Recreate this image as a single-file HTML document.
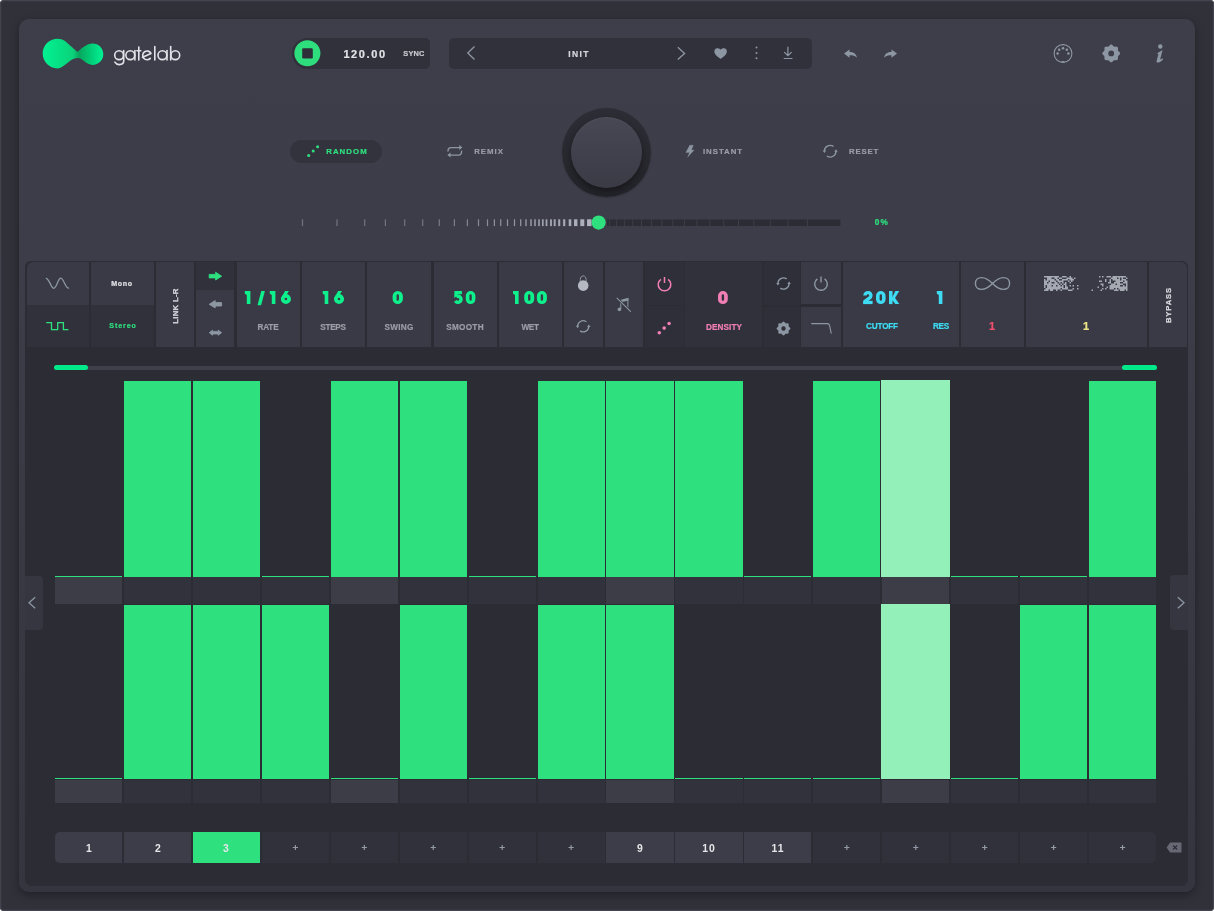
<!DOCTYPE html>
<html><head><meta charset="utf-8"><title>gatelab</title>
<style>
html,body{margin:0;padding:0;background:#ffffff;}
body{width:1214px;height:911px;position:relative;overflow:hidden;font-family:"Liberation Sans",sans-serif;}
div{box-sizing:border-box;}
</style></head><body>
<div style="position:absolute;left:0.00px;top:0.00px;width:1214.00px;height:911.00px;background:#31313a;border-radius:4px;box-shadow:inset 0 0 0 1.2px #44444f;"></div>
<div style="position:absolute;left:19.00px;top:19.00px;width:1176.00px;height:873.00px;background:linear-gradient(180deg,#3e3e4a 0%,#3d3d49 30%,#393944 60%,#35353f 100%);border-radius:10px;box-shadow:0 3px 8px rgba(0,0,0,.35);"></div>
<div style="position:absolute;left:25.00px;top:261.00px;width:1163.00px;height:625.00px;background:#2c2c35;border-radius:6px 6px 7px 7px;"></div>
<div style="position:absolute;left:292.00px;top:37.50px;width:137.50px;height:31.50px;background:#31313b;border-radius:16px 5px 5px 16px;"></div>
<div style="position:absolute;left:214.80px;top:49.06px;width:300px;text-align:center;font-size:11.00px;line-height:11.00px;font-weight:bold;color:#e2e2e6;letter-spacing:1.60px;white-space:nowrap;will-change:transform;-webkit-text-stroke:0.2px #e2e2e6;">120.00</div>
<div style="position:absolute;left:263.90px;top:50.13px;width:300px;text-align:center;font-size:7.40px;line-height:7.40px;font-weight:bold;color:#c8c9d0;letter-spacing:0.20px;white-space:nowrap;will-change:transform;-webkit-text-stroke:0.2px #c8c9d0;">SYNC</div>
<div style="position:absolute;left:449.00px;top:38.00px;width:363.00px;height:31.00px;background:#31313b;border-radius:5px;"></div>
<div style="position:absolute;left:428.70px;top:49.89px;width:300px;text-align:center;font-size:8.50px;line-height:8.50px;font-weight:bold;color:#d6d7dc;letter-spacing:1.40px;white-space:nowrap;will-change:transform;-webkit-text-stroke:0.2px #d6d7dc;">INIT</div>
<div style="position:absolute;left:289.50px;top:140.00px;width:92.50px;height:23.00px;background:#33333e;border-radius:12px;"></div>
<div style="position:absolute;left:196.85px;top:148.28px;width:300px;text-align:center;font-size:7.80px;line-height:7.80px;font-weight:bold;color:#2ee07e;letter-spacing:1.10px;white-space:nowrap;will-change:transform;-webkit-text-stroke:0.2px #2ee07e;">RANDOM</div>
<div style="position:absolute;left:338.55px;top:148.28px;width:300px;text-align:center;font-size:7.80px;line-height:7.80px;font-weight:bold;color:#9b9ca6;letter-spacing:1.00px;white-space:nowrap;will-change:transform;-webkit-text-stroke:0.2px #9b9ca6;">REMIX</div>
<div style="position:absolute;left:573.15px;top:148.28px;width:300px;text-align:center;font-size:7.80px;line-height:7.80px;font-weight:bold;color:#9b9ca6;letter-spacing:1.00px;white-space:nowrap;will-change:transform;-webkit-text-stroke:0.2px #9b9ca6;">INSTANT</div>
<div style="position:absolute;left:713.80px;top:148.28px;width:300px;text-align:center;font-size:7.80px;line-height:7.80px;font-weight:bold;color:#9b9ca6;letter-spacing:0.80px;white-space:nowrap;will-change:transform;-webkit-text-stroke:0.2px #9b9ca6;">RESET</div>
<div style="position:absolute;left:562px;top:107.5px;width:89px;height:89px;border-radius:50%;background:linear-gradient(180deg,#2d2d36 0%,#28282f 60%,#222229 100%);box-shadow:0 1px 2px rgba(0,0,0,.2);"></div>
<div style="position:absolute;left:571px;top:116.8px;width:71px;height:71px;border-radius:50%;background:linear-gradient(180deg,#484855 0%,#41414d 50%,#3b3b46 100%);box-shadow:0 3px 6px rgba(0,0,0,.4), inset 0 1px 0 rgba(255,255,255,.05);"></div>
<div style="position:absolute;left:732.30px;top:218.22px;width:300px;text-align:center;font-size:8.30px;line-height:8.30px;font-weight:bold;color:#2ee07e;letter-spacing:1.30px;white-space:nowrap;will-change:transform;-webkit-text-stroke:0.2px #2ee07e;">0%</div>
<div style="position:absolute;left:26.70px;top:262.20px;width:62.30px;height:42.40px;background:#3a3a46;border-top-left-radius:6px;"></div>
<div style="position:absolute;left:26.70px;top:304.60px;width:62.30px;height:42.40px;background:#31313b;"></div>
<div style="position:absolute;left:91.00px;top:262.20px;width:63.00px;height:42.40px;background:#3a3a46;"></div>
<div style="position:absolute;left:91.00px;top:304.60px;width:63.00px;height:42.40px;background:#31313b;"></div>
<div style="position:absolute;left:156.00px;top:262.20px;width:38.20px;height:84.80px;background:#3a3a46;"></div>
<div style="position:absolute;left:196.40px;top:262.20px;width:37.60px;height:27.80px;background:#31313b;"></div>
<div style="position:absolute;left:196.40px;top:290.00px;width:37.60px;height:57.00px;background:#3a3a46;"></div>
<div style="position:absolute;left:237.00px;top:262.20px;width:63.20px;height:84.80px;background:#3a3a46;"></div>
<div style="position:absolute;left:302.20px;top:262.20px;width:62.90px;height:84.80px;background:#3a3a46;"></div>
<div style="position:absolute;left:367.20px;top:262.20px;width:63.50px;height:84.80px;background:#3a3a46;"></div>
<div style="position:absolute;left:433.60px;top:262.20px;width:63.90px;height:84.80px;background:#3a3a46;"></div>
<div style="position:absolute;left:499.00px;top:262.20px;width:63.00px;height:84.80px;background:#3a3a46;"></div>
<div style="position:absolute;left:564.20px;top:262.20px;width:39.00px;height:84.80px;background:#3a3a46;"></div>
<div style="position:absolute;left:604.50px;top:262.20px;width:38.50px;height:84.80px;background:#3a3a46;"></div>
<div style="position:absolute;left:644.50px;top:262.20px;width:39.70px;height:42.50px;background:#2f2f39;"></div>
<div style="position:absolute;left:644.50px;top:306.00px;width:39.70px;height:41.00px;background:#2f2f39;"></div>
<div style="position:absolute;left:685.30px;top:262.20px;width:77.10px;height:84.80px;background:#31313b;"></div>
<div style="position:absolute;left:764.00px;top:262.20px;width:36.30px;height:43.00px;background:#2f2f39;"></div>
<div style="position:absolute;left:764.00px;top:307.00px;width:36.30px;height:40.00px;background:#2f2f39;"></div>
<div style="position:absolute;left:801.40px;top:262.20px;width:39.80px;height:42.30px;background:#3a3a46;"></div>
<div style="position:absolute;left:801.40px;top:306.50px;width:39.80px;height:40.50px;background:#3a3a46;"></div>
<div style="position:absolute;left:842.90px;top:262.20px;width:116.20px;height:84.80px;background:#3a3a46;"></div>
<div style="position:absolute;left:961.00px;top:262.20px;width:63.20px;height:84.80px;background:#3a3a46;"></div>
<div style="position:absolute;left:1026.20px;top:262.20px;width:120.60px;height:84.80px;background:#3a3a46;"></div>
<div style="position:absolute;left:1149.10px;top:262.20px;width:38.10px;height:84.80px;background:#3a3a46;border-top-right-radius:6px;"></div>
<div style="position:absolute;left:-27.60px;top:280.77px;width:300px;text-align:center;font-size:7.10px;line-height:7.10px;font-weight:bold;color:#e2e2e6;letter-spacing:0.60px;white-space:nowrap;will-change:transform;-webkit-text-stroke:0.2px #e2e2e6;">Mono</div>
<div style="position:absolute;left:-27.50px;top:323.07px;width:300px;text-align:center;font-size:7.10px;line-height:7.10px;font-weight:bold;color:#2ee07e;letter-spacing:0.90px;white-space:nowrap;will-change:transform;-webkit-text-stroke:0.2px #2ee07e;">Stereo</div>
<div style="position:absolute;left:125.5px;top:301px;width:100px;height:10px;text-align:center;font-size:7.8px;line-height:10px;font-weight:bold;color:#d6d7dc;letter-spacing:0.25px;transform:rotate(-90deg);white-space:nowrap;will-change:transform;-webkit-text-stroke:0.25px #d6d7dc;">LINK L-R</div>
<div style="position:absolute;left:1118.7px;top:300px;width:100px;height:10px;text-align:center;font-size:7.6px;line-height:10px;font-weight:bold;color:#d6d7dc;letter-spacing:0.9px;transform:rotate(-90deg);white-space:nowrap;will-change:transform;-webkit-text-stroke:0.25px #d6d7dc;">BYPASS</div>
<div style="position:absolute;left:118.15px;top:323.83px;width:300px;text-align:center;font-size:8.20px;line-height:8.20px;font-weight:bold;color:#9b9ca6;letter-spacing:-0.20px;white-space:nowrap;will-change:transform;-webkit-text-stroke:0.2px #9b9ca6;">RATE</div>
<div style="position:absolute;left:183.05px;top:323.83px;width:300px;text-align:center;font-size:8.20px;line-height:8.20px;font-weight:bold;color:#9b9ca6;letter-spacing:-0.30px;white-space:nowrap;will-change:transform;-webkit-text-stroke:0.2px #9b9ca6;">STEPS</div>
<div style="position:absolute;left:248.75px;top:323.83px;width:300px;text-align:center;font-size:8.20px;line-height:8.20px;font-weight:bold;color:#9b9ca6;letter-spacing:0.30px;white-space:nowrap;will-change:transform;-webkit-text-stroke:0.2px #9b9ca6;">SWING</div>
<div style="position:absolute;left:314.85px;top:323.83px;width:300px;text-align:center;font-size:8.20px;line-height:8.20px;font-weight:bold;color:#9b9ca6;letter-spacing:0.30px;white-space:nowrap;will-change:transform;-webkit-text-stroke:0.2px #9b9ca6;">SMOOTH</div>
<div style="position:absolute;left:380.15px;top:323.83px;width:300px;text-align:center;font-size:8.20px;line-height:8.20px;font-weight:bold;color:#9b9ca6;letter-spacing:-0.40px;white-space:nowrap;will-change:transform;-webkit-text-stroke:0.2px #9b9ca6;">WET</div>
<div style="position:absolute;left:573.50px;top:323.63px;width:300px;text-align:center;font-size:8.20px;line-height:8.20px;font-weight:bold;color:#f17fb5;letter-spacing:0.10px;white-space:nowrap;will-change:transform;-webkit-text-stroke:0.2px #f17fb5;">DENSITY</div>
<div style="position:absolute;left:732.05px;top:323.43px;width:300px;text-align:center;font-size:8.20px;line-height:8.20px;font-weight:bold;color:#3ddcf3;letter-spacing:-0.20px;white-space:nowrap;will-change:transform;-webkit-text-stroke:0.2px #3ddcf3;">CUTOFF</div>
<div style="position:absolute;left:790.95px;top:323.43px;width:300px;text-align:center;font-size:8.20px;line-height:8.20px;font-weight:bold;color:#3ddcf3;letter-spacing:-0.20px;white-space:nowrap;will-change:transform;-webkit-text-stroke:0.2px #3ddcf3;">RES</div>
<div style="position:absolute;left:841.85px;top:321.36px;width:300px;text-align:center;font-size:11.00px;line-height:11.00px;font-weight:bold;color:#f0506e;letter-spacing:0.00px;white-space:nowrap;will-change:transform;-webkit-text-stroke:0.2px #f0506e;">1</div>
<div style="position:absolute;left:935.70px;top:321.36px;width:300px;text-align:center;font-size:11.00px;line-height:11.00px;font-weight:bold;color:#ede488;letter-spacing:0.00px;white-space:nowrap;will-change:transform;-webkit-text-stroke:0.2px #ede488;">1</div>
<div style="position:absolute;left:55.00px;top:365.60px;width:1102.00px;height:4.30px;background:#40404b;border-radius:2px;"></div>
<div style="position:absolute;left:53.80px;top:365.00px;width:34.70px;height:5.30px;background:#00ea8a;border-radius:3px;"></div>
<div style="position:absolute;left:1122.00px;top:365.00px;width:34.60px;height:5.30px;background:#00ea8a;border-radius:3px;"></div>
<div style="position:absolute;left:55.00px;top:575.70px;width:67.20px;height:1.30px;background:#2ee07e;"></div>
<div style="position:absolute;left:55.00px;top:577.00px;width:67.20px;height:27.00px;background:#3d3d48;"></div>
<div style="position:absolute;left:55.00px;top:778.20px;width:67.20px;height:1.30px;background:#2ee07e;"></div>
<div style="position:absolute;left:55.00px;top:779.50px;width:67.20px;height:23.50px;background:#3d3d48;"></div>
<div style="position:absolute;left:123.93px;top:381.00px;width:67.20px;height:196.00px;background:#2ee07e;"></div>
<div style="position:absolute;left:123.93px;top:577.00px;width:67.20px;height:27.00px;background:#32323c;"></div>
<div style="position:absolute;left:123.93px;top:604.80px;width:67.20px;height:174.70px;background:#2ee07e;"></div>
<div style="position:absolute;left:123.93px;top:779.50px;width:67.20px;height:23.50px;background:#32323c;"></div>
<div style="position:absolute;left:192.86px;top:381.00px;width:67.20px;height:196.00px;background:#2ee07e;"></div>
<div style="position:absolute;left:192.86px;top:577.00px;width:67.20px;height:27.00px;background:#32323c;"></div>
<div style="position:absolute;left:192.86px;top:604.80px;width:67.20px;height:174.70px;background:#2ee07e;"></div>
<div style="position:absolute;left:192.86px;top:779.50px;width:67.20px;height:23.50px;background:#32323c;"></div>
<div style="position:absolute;left:261.79px;top:575.70px;width:67.20px;height:1.30px;background:#2ee07e;"></div>
<div style="position:absolute;left:261.79px;top:577.00px;width:67.20px;height:27.00px;background:#32323c;"></div>
<div style="position:absolute;left:261.79px;top:604.80px;width:67.20px;height:174.70px;background:#2ee07e;"></div>
<div style="position:absolute;left:261.79px;top:779.50px;width:67.20px;height:23.50px;background:#32323c;"></div>
<div style="position:absolute;left:330.72px;top:381.00px;width:67.20px;height:196.00px;background:#2ee07e;"></div>
<div style="position:absolute;left:330.72px;top:577.00px;width:67.20px;height:27.00px;background:#3d3d48;"></div>
<div style="position:absolute;left:330.72px;top:778.20px;width:67.20px;height:1.30px;background:#2ee07e;"></div>
<div style="position:absolute;left:330.72px;top:779.50px;width:67.20px;height:23.50px;background:#3d3d48;"></div>
<div style="position:absolute;left:399.65px;top:381.00px;width:67.20px;height:196.00px;background:#2ee07e;"></div>
<div style="position:absolute;left:399.65px;top:577.00px;width:67.20px;height:27.00px;background:#32323c;"></div>
<div style="position:absolute;left:399.65px;top:604.80px;width:67.20px;height:174.70px;background:#2ee07e;"></div>
<div style="position:absolute;left:399.65px;top:779.50px;width:67.20px;height:23.50px;background:#32323c;"></div>
<div style="position:absolute;left:468.58px;top:575.70px;width:67.20px;height:1.30px;background:#2ee07e;"></div>
<div style="position:absolute;left:468.58px;top:577.00px;width:67.20px;height:27.00px;background:#32323c;"></div>
<div style="position:absolute;left:468.58px;top:778.20px;width:67.20px;height:1.30px;background:#2ee07e;"></div>
<div style="position:absolute;left:468.58px;top:779.50px;width:67.20px;height:23.50px;background:#32323c;"></div>
<div style="position:absolute;left:537.51px;top:381.00px;width:67.20px;height:196.00px;background:#2ee07e;"></div>
<div style="position:absolute;left:537.51px;top:577.00px;width:67.20px;height:27.00px;background:#32323c;"></div>
<div style="position:absolute;left:537.51px;top:604.80px;width:67.20px;height:174.70px;background:#2ee07e;"></div>
<div style="position:absolute;left:537.51px;top:779.50px;width:67.20px;height:23.50px;background:#32323c;"></div>
<div style="position:absolute;left:606.44px;top:381.00px;width:67.20px;height:196.00px;background:#2ee07e;"></div>
<div style="position:absolute;left:606.44px;top:577.00px;width:67.20px;height:27.00px;background:#3d3d48;"></div>
<div style="position:absolute;left:606.44px;top:604.80px;width:67.20px;height:174.70px;background:#2ee07e;"></div>
<div style="position:absolute;left:606.44px;top:779.50px;width:67.20px;height:23.50px;background:#3d3d48;"></div>
<div style="position:absolute;left:675.37px;top:381.00px;width:67.20px;height:196.00px;background:#2ee07e;"></div>
<div style="position:absolute;left:675.37px;top:577.00px;width:67.20px;height:27.00px;background:#32323c;"></div>
<div style="position:absolute;left:675.37px;top:778.20px;width:67.20px;height:1.30px;background:#2ee07e;"></div>
<div style="position:absolute;left:675.37px;top:779.50px;width:67.20px;height:23.50px;background:#32323c;"></div>
<div style="position:absolute;left:744.30px;top:575.70px;width:67.20px;height:1.30px;background:#2ee07e;"></div>
<div style="position:absolute;left:744.30px;top:577.00px;width:67.20px;height:27.00px;background:#32323c;"></div>
<div style="position:absolute;left:744.30px;top:778.20px;width:67.20px;height:1.30px;background:#2ee07e;"></div>
<div style="position:absolute;left:744.30px;top:779.50px;width:67.20px;height:23.50px;background:#32323c;"></div>
<div style="position:absolute;left:813.23px;top:381.00px;width:67.20px;height:196.00px;background:#2ee07e;"></div>
<div style="position:absolute;left:813.23px;top:577.00px;width:67.20px;height:27.00px;background:#32323c;"></div>
<div style="position:absolute;left:813.23px;top:778.20px;width:67.20px;height:1.30px;background:#2ee07e;"></div>
<div style="position:absolute;left:813.23px;top:779.50px;width:67.20px;height:23.50px;background:#32323c;"></div>
<div style="position:absolute;left:881.36px;top:380.00px;width:68.80px;height:197.00px;background:#93f0b9;"></div>
<div style="position:absolute;left:882.16px;top:577.00px;width:67.20px;height:27.00px;background:#3d3d48;"></div>
<div style="position:absolute;left:881.36px;top:603.80px;width:68.80px;height:175.70px;background:#93f0b9;"></div>
<div style="position:absolute;left:882.16px;top:779.50px;width:67.20px;height:23.50px;background:#3d3d48;"></div>
<div style="position:absolute;left:951.09px;top:575.70px;width:67.20px;height:1.30px;background:#2ee07e;"></div>
<div style="position:absolute;left:951.09px;top:577.00px;width:67.20px;height:27.00px;background:#32323c;"></div>
<div style="position:absolute;left:951.09px;top:778.20px;width:67.20px;height:1.30px;background:#2ee07e;"></div>
<div style="position:absolute;left:951.09px;top:779.50px;width:67.20px;height:23.50px;background:#32323c;"></div>
<div style="position:absolute;left:1020.02px;top:575.70px;width:67.20px;height:1.30px;background:#2ee07e;"></div>
<div style="position:absolute;left:1020.02px;top:577.00px;width:67.20px;height:27.00px;background:#32323c;"></div>
<div style="position:absolute;left:1020.02px;top:604.80px;width:67.20px;height:174.70px;background:#2ee07e;"></div>
<div style="position:absolute;left:1020.02px;top:779.50px;width:67.20px;height:23.50px;background:#32323c;"></div>
<div style="position:absolute;left:1088.95px;top:381.00px;width:67.20px;height:196.00px;background:#2ee07e;"></div>
<div style="position:absolute;left:1088.95px;top:577.00px;width:67.20px;height:27.00px;background:#32323c;"></div>
<div style="position:absolute;left:1088.95px;top:604.80px;width:67.20px;height:174.70px;background:#2ee07e;"></div>
<div style="position:absolute;left:1088.95px;top:779.50px;width:67.20px;height:23.50px;background:#32323c;"></div>
<div style="position:absolute;left:55.00px;top:831.50px;width:67.20px;height:31.70px;background:#3d3d49;border-radius:5px 0 0 5px;"></div>
<div style="position:absolute;left:-61.40px;top:843.74px;width:300px;text-align:center;font-size:10.40px;line-height:10.40px;font-weight:bold;color:#e6e6ea;letter-spacing:0.00px;white-space:nowrap;will-change:transform;">1</div>
<div style="position:absolute;left:123.93px;top:831.50px;width:67.20px;height:31.70px;background:#3d3d49;"></div>
<div style="position:absolute;left:7.53px;top:843.74px;width:300px;text-align:center;font-size:10.40px;line-height:10.40px;font-weight:bold;color:#e6e6ea;letter-spacing:0.00px;white-space:nowrap;will-change:transform;">2</div>
<div style="position:absolute;left:192.86px;top:831.50px;width:67.20px;height:31.70px;background:#2ee07e;"></div>
<div style="position:absolute;left:76.46px;top:843.74px;width:300px;text-align:center;font-size:10.40px;line-height:10.40px;font-weight:bold;color:#e6e6ea;letter-spacing:0.00px;white-space:nowrap;will-change:transform;">3</div>
<div style="position:absolute;left:261.79px;top:831.50px;width:67.20px;height:31.70px;background:#31313b;"></div>
<div style="position:absolute;left:330.72px;top:831.50px;width:67.20px;height:31.70px;background:#31313b;"></div>
<div style="position:absolute;left:399.65px;top:831.50px;width:67.20px;height:31.70px;background:#31313b;"></div>
<div style="position:absolute;left:468.58px;top:831.50px;width:67.20px;height:31.70px;background:#31313b;"></div>
<div style="position:absolute;left:537.51px;top:831.50px;width:67.20px;height:31.70px;background:#31313b;"></div>
<div style="position:absolute;left:606.44px;top:831.50px;width:67.20px;height:31.70px;background:#3d3d49;"></div>
<div style="position:absolute;left:490.04px;top:843.74px;width:300px;text-align:center;font-size:10.40px;line-height:10.40px;font-weight:bold;color:#e6e6ea;letter-spacing:0.00px;white-space:nowrap;will-change:transform;">9</div>
<div style="position:absolute;left:675.37px;top:831.50px;width:67.20px;height:31.70px;background:#3d3d49;"></div>
<div style="position:absolute;left:559.47px;top:843.74px;width:300px;text-align:center;font-size:10.40px;line-height:10.40px;font-weight:bold;color:#e6e6ea;letter-spacing:1.00px;white-space:nowrap;will-change:transform;">10</div>
<div style="position:absolute;left:744.30px;top:831.50px;width:67.20px;height:31.70px;background:#3d3d49;"></div>
<div style="position:absolute;left:628.40px;top:843.74px;width:300px;text-align:center;font-size:10.40px;line-height:10.40px;font-weight:bold;color:#e6e6ea;letter-spacing:1.00px;white-space:nowrap;will-change:transform;">11</div>
<div style="position:absolute;left:813.23px;top:831.50px;width:67.20px;height:31.70px;background:#31313b;"></div>
<div style="position:absolute;left:882.16px;top:831.50px;width:67.20px;height:31.70px;background:#31313b;"></div>
<div style="position:absolute;left:951.09px;top:831.50px;width:67.20px;height:31.70px;background:#31313b;"></div>
<div style="position:absolute;left:1020.02px;top:831.50px;width:67.20px;height:31.70px;background:#31313b;"></div>
<div style="position:absolute;left:1088.95px;top:831.50px;width:67.20px;height:31.70px;background:#31313b;border-radius:0 5px 5px 0;"></div>
<div style="position:absolute;left:25.00px;top:575.80px;width:17.70px;height:54.10px;background:#363641;border-radius:0 4px 4px 0;"></div>
<div style="position:absolute;left:1170.40px;top:575.20px;width:17.60px;height:54.50px;background:#363641;border-radius:4px 0 0 4px;"></div>
<svg style="position:absolute;left:0;top:0" width="1214" height="911" viewBox="0 0 1214 911">
<defs><linearGradient id="lg" gradientUnits="userSpaceOnUse" x1="42" y1="0" x2="104" y2="0">
<stop offset="0" stop-color="#00f292"/><stop offset="0.5" stop-color="#0bd27a"/><stop offset="0.6" stop-color="#07a55d"/><stop offset="0.72" stop-color="#03c06e"/><stop offset="1" stop-color="#00f595"/></linearGradient></defs>
<path fill="url(#lg)" d="M57.5 38.8 C49.3 38.8 42.7 45.4 42.7 53.6 C42.7 61.8 49.3 68.4 57.5 68.4 C64 68.4 70 58 77.5 58 C83 58 86 64.9 92.6 64.9 C98.5 64.9 103.3 60.1 103.3 54.2 C103.3 48.3 98.5 43.6 92.6 43.6 C86 43.6 80 50 77.5 52 L65 41 C62.5 39.7 60.5 38.8 57.5 38.8 Z"/>
<g fill="none" stroke="#e2e2e8" stroke-width="1.6" stroke-linecap="round"><circle cx="119.1" cy="55.2" r="4.4"/><path d="M123.7 50.6 V61 C123.7 63.3 121.8 64.6 119.3 64.6 C117.2 64.6 115.7 63.6 114.9 62.2"/><circle cx="130.3" cy="55.2" r="4.4"/><path d="M134.9 50.6 V59.9"/><path d="M138.8 47 V59.9 M136.9 50.7 H140.8"/><path d="M151.0 53.4 A4.4 4.4 0 1 0 150.3 58.4 M151.0 53.4 L142.5 57.3"/><path d="M154.8 46.6 V59.9"/><circle cx="162.4" cy="55.2" r="4.4"/><path d="M167.0 50.6 V59.9"/><path d="M170.7 46.6 V59.9"/><circle cx="175.3" cy="55.2" r="4.4"/></g>
<circle cx="307.4" cy="53.2" r="13" fill="#2ede7d"/>
<rect x="302.2" y="48.2" width="10.6" height="10.2" rx="1.2" fill="#2e2e38"/>
<path d="M474.5 46.5 L467.8 53 L474.5 59.5" fill="none" stroke="#8d97a3" stroke-width="1.3"/>
<path d="M677.8 47.3 L684.6 53.4 L677.8 59.5" fill="none" stroke="#8d97a3" stroke-width="1.3"/>
<path d="M720.6 58.2 C716.8 55.8 714.9 53.8 714.9 51.5 C714.9 49.8 716.1 48.7 717.6 48.7 C718.9 48.7 719.9 49.4 720.6 50.4 C721.3 49.4 722.3 48.7 723.6 48.7 C725.1 48.7 726.3 49.8 726.3 51.5 C726.3 53.8 724.4 55.8 720.6 58.2 Z" fill="#8d97a3" stroke="#8d97a3" stroke-width="1.1" stroke-linejoin="round"/>
<circle cx="756.5" cy="47.5" r="1" fill="#8d97a3"/>
<circle cx="756.5" cy="53" r="1" fill="#8d97a3"/>
<circle cx="756.5" cy="58.3" r="1" fill="#8d97a3"/>
<path d="M787.9 47.2 V55.6 M784.5 52.3 L787.9 55.7 L791.3 52.3 M784.2 58.5 H792" fill="none" stroke="#8d97a3" stroke-width="1.2" stroke-linecap="round"/>
<path d="M844 53.6 L849.5 49.6 V52 C853.5 52 856 53.5 857 57.7 C855 55.8 853 55.3 849.5 55.3 V57.7 Z" fill="#8d97a3"/>
<path d="M897 53.6 L891.5 49.6 V52 C887.5 52 885 53.5 884 57.7 C886 55.8 888 55.3 891.5 55.3 V57.7 Z" fill="#8d97a3"/>
<circle cx="1063" cy="53.5" r="8.9" fill="none" stroke="#8d97a3" stroke-width="1.1"/>
<circle cx="1057.60" cy="53.50" r="1.25" fill="#8d97a3"/>
<circle cx="1059.18" cy="49.75" r="1.25" fill="#8d97a3"/>
<circle cx="1063.00" cy="48.20" r="1.25" fill="#8d97a3"/>
<circle cx="1066.82" cy="49.75" r="1.25" fill="#8d97a3"/>
<circle cx="1068.40" cy="53.50" r="1.25" fill="#8d97a3"/>
<path d="M1060.9 62.5 Q1063 59.6 1065.1 62.5 Z" fill="#8d97a3"/>
<path d="M1111.20 44.50 L1111.78 44.62 L1112.31 44.95 L1112.79 45.41 L1113.21 45.89 L1113.61 46.30 L1114.03 46.56 L1114.52 46.67 L1115.09 46.67 L1115.73 46.62 L1116.39 46.64 L1117.00 46.78 L1117.49 47.11 L1117.82 47.60 L1117.96 48.21 L1117.98 48.87 L1117.93 49.51 L1117.93 50.08 L1118.04 50.57 L1118.30 50.99 L1118.71 51.39 L1119.19 51.81 L1119.65 52.29 L1119.98 52.82 L1120.10 53.40 L1119.98 53.98 L1119.65 54.51 L1119.19 54.99 L1118.71 55.41 L1118.30 55.81 L1118.04 56.23 L1117.93 56.72 L1117.93 57.29 L1117.98 57.93 L1117.96 58.59 L1117.82 59.20 L1117.49 59.69 L1117.00 60.02 L1116.39 60.16 L1115.73 60.18 L1115.09 60.13 L1114.52 60.13 L1114.03 60.24 L1113.61 60.50 L1113.21 60.91 L1112.79 61.39 L1112.31 61.85 L1111.78 62.18 L1111.20 62.30 L1110.62 62.18 L1110.09 61.85 L1109.61 61.39 L1109.19 60.91 L1108.79 60.50 L1108.37 60.24 L1107.88 60.13 L1107.31 60.13 L1106.67 60.18 L1106.01 60.16 L1105.40 60.02 L1104.91 59.69 L1104.58 59.20 L1104.44 58.59 L1104.42 57.93 L1104.47 57.29 L1104.47 56.72 L1104.36 56.23 L1104.10 55.81 L1103.69 55.41 L1103.21 54.99 L1102.75 54.51 L1102.42 53.98 L1102.30 53.40 L1102.42 52.82 L1102.75 52.29 L1103.21 51.81 L1103.69 51.39 L1104.10 50.99 L1104.36 50.57 L1104.47 50.08 L1104.47 49.51 L1104.42 48.87 L1104.44 48.21 L1104.58 47.60 L1104.91 47.11 L1105.40 46.78 L1106.01 46.64 L1106.67 46.62 L1107.31 46.67 L1107.88 46.67 L1108.37 46.56 L1108.79 46.30 L1109.19 45.89 L1109.61 45.41 L1110.09 44.95 L1110.62 44.62 L1111.20 44.50 Z M1114.1000000000001 53.4 A2.9 2.9 0 1 0 1108.3 53.4 A2.9 2.9 0 1 0 1114.1000000000001 53.4 Z" fill="#8d97a3" fill-rule="evenodd"/>
<circle cx="1160.3" cy="46.5" r="2.2" fill="#8d97a3"/>
<path d="M1156.8 53.4 L1162.6 49.9 L1160.1 59.4 L1163.1 58.2 L1162.7 59.9 C1161 61.5 1159 62.6 1157.7 62.6 C1156.7 62.6 1156.3 61.9 1156.6 60.8 L1158.5 54 Z" fill="#8d97a3"/>
<circle cx="308.7" cy="155.6" r="1.5" fill="#2ee07e"/>
<circle cx="313.2" cy="151.1" r="1.5" fill="#2ee07e"/>
<circle cx="317.6" cy="146.7" r="1.5" fill="#2ee07e"/>
<path d="M448 151 C448 149 449.3 147.6 451.2 147.6 H459.6 M461.6 151.2 C461.6 153.4 460.4 155.1 458.4 155.1 H450.2" fill="none" stroke="#8d97a3" stroke-width="1.4" stroke-linecap="round"/>
<path d="M459.3 145.1 L462.3 147.6 L459.3 150.1 Z M450.5 152.6 L447.4 155.1 L450.5 157.6 Z" fill="#8d97a3"/>
<path d="M689.8 145.2 L693.3 145.2 L691.4 150.1 L694.1 150.1 L687.6 157.3 L689.5 152.4 L685.8 152.4 Z" fill="#8d97a3" stroke="#8d97a3" stroke-width="0.3" stroke-linejoin="round"/>
<path d="M833.10 146.18 A5.8 5.8 0 0 0 824.40 151.20 M827.30 156.22 A5.8 5.8 0 0 0 836.00 151.20" fill="none" stroke="#8d97a3" stroke-width="1.3" stroke-linecap="round"/><path d="M822.70 150.60 L826.10 150.60 L824.40 153.10 Z" fill="#8d97a3"/><path d="M834.30 151.80 L837.70 151.80 L836.00 149.30 Z" fill="#8d97a3"/>
<rect x="301.90" y="219.3" width="1.20" height="6.8" fill="rgb(112,116,126)"/>
<rect x="336.40" y="219.3" width="1.20" height="6.8" fill="rgb(112,116,126)"/>
<rect x="364.10" y="219.3" width="1.20" height="6.8" fill="rgb(112,116,126)"/>
<rect x="384.80" y="219.3" width="1.20" height="6.8" fill="rgb(112,116,126)"/>
<rect x="404.10" y="219.3" width="1.20" height="6.8" fill="rgb(112,116,126)"/>
<rect x="422.10" y="219.3" width="1.20" height="6.8" fill="rgb(113,117,127)"/>
<rect x="438.70" y="219.3" width="1.20" height="6.8" fill="rgb(119,123,133)"/>
<rect x="453.80" y="219.3" width="1.20" height="6.8" fill="rgb(124,128,138)"/>
<rect x="466.80" y="219.3" width="1.20" height="6.8" fill="rgb(129,133,143)"/>
<rect x="477.90" y="219.3" width="1.20" height="6.8" fill="rgb(134,138,148)"/>
<rect x="486.90" y="219.3" width="1.20" height="6.8" fill="rgb(137,141,151)"/>
<rect x="493.80" y="219.3" width="1.20" height="6.8" fill="rgb(140,144,154)"/>
<rect x="500.10" y="219.3" width="1.20" height="6.8" fill="rgb(142,146,156)"/>
<rect x="506.90" y="219.3" width="1.20" height="6.8" fill="rgb(144,148,158)"/>
<rect x="513.90" y="219.3" width="1.20" height="6.8" fill="rgb(147,151,161)"/>
<rect x="520.09" y="219.3" width="1.22" height="6.8" fill="rgb(149,153,163)"/>
<rect x="525.33" y="219.3" width="1.33" height="6.8" fill="rgb(151,155,165)"/>
<rect x="530.28" y="219.3" width="1.44" height="6.8" fill="rgb(153,157,167)"/>
<rect x="534.24" y="219.3" width="1.53" height="6.8" fill="rgb(155,159,169)"/>
<rect x="538.19" y="219.3" width="1.61" height="6.8" fill="rgb(156,160,170)"/>
<rect x="541.95" y="219.3" width="1.70" height="6.8" fill="rgb(158,162,172)"/>
<rect x="545.61" y="219.3" width="1.78" height="6.8" fill="rgb(159,163,173)"/>
<rect x="550.06" y="219.3" width="1.87" height="6.8" fill="rgb(161,165,175)"/>
<rect x="553.72" y="219.3" width="1.95" height="6.8" fill="rgb(162,166,176)"/>
<rect x="558.17" y="219.3" width="2.05" height="6.8" fill="rgb(164,168,178)"/>
<rect x="563.12" y="219.3" width="2.16" height="6.8" fill="rgb(166,170,180)"/>
<rect x="568.70" y="219.3" width="2.60" height="6.8" fill="rgb(168,172,182)"/>
<rect x="574.00" y="219.3" width="3.40" height="6.8" fill="rgb(170,174,184)"/>
<rect x="580.30" y="219.3" width="4.00" height="6.8" fill="rgb(173,177,187)"/>
<rect x="587.05" y="219.3" width="4.50" height="6.8" fill="rgb(175,179,189)"/>
<rect x="607.00" y="219.5" width="2.10" height="6.5" fill="#2c2c35"/>
<rect x="610.10" y="219.5" width="6.00" height="6.5" fill="#2c2c35"/>
<rect x="617.10" y="219.5" width="6.80" height="6.5" fill="#2c2c35"/>
<rect x="624.90" y="219.5" width="7.30" height="6.5" fill="#2c2c35"/>
<rect x="633.20" y="219.5" width="7.80" height="6.5" fill="#2c2c35"/>
<rect x="642.00" y="219.5" width="8.90" height="6.5" fill="#2c2c35"/>
<rect x="651.90" y="219.5" width="9.50" height="6.5" fill="#2c2c35"/>
<rect x="662.40" y="219.5" width="9.90" height="6.5" fill="#2c2c35"/>
<rect x="673.30" y="219.5" width="10.60" height="6.5" fill="#2c2c35"/>
<rect x="684.90" y="219.5" width="11.50" height="6.5" fill="#2c2c35"/>
<rect x="697.40" y="219.5" width="11.90" height="6.5" fill="#2c2c35"/>
<rect x="710.30" y="219.5" width="12.90" height="6.5" fill="#2c2c35"/>
<rect x="724.20" y="219.5" width="13.80" height="6.5" fill="#2c2c35"/>
<rect x="739.00" y="219.5" width="14.30" height="6.5" fill="#2c2c35"/>
<rect x="754.30" y="219.5" width="15.60" height="6.5" fill="#2c2c35"/>
<rect x="770.90" y="219.5" width="16.50" height="6.5" fill="#2c2c35"/>
<rect x="788.40" y="219.5" width="18.60" height="6.5" fill="#2c2c35"/>
<rect x="808.00" y="219.5" width="32.30" height="6.5" fill="#2c2c35"/>
<circle cx="598.6" cy="222.6" r="7.1" fill="#2ee07e"/>
<path d="M244.80 291.0 H250.40 V304.1 H246.80 V294.90 L244.80 293.70 Z" fill="#0ef08c"/>
<path d="M257.5 305.3 L261.1 305.3 L264.9 291.0 L261.3 291.0 Z" fill="#0ef08c"/>
<path d="M269.80 291.0 H275.40 V304.1 H271.80 V294.90 L269.80 293.70 Z" fill="#0ef08c"/>
<path fill-rule="evenodd" fill="#0ef08c" d="M290.95 299.05 A5.05 5.05 0 1 1 280.85 299.05 A5.05 5.05 0 1 1 290.95 299.05 Z M287.20 299.05 A1.3 1.3 0 1 0 284.60 299.05 A1.3 1.3 0 1 0 287.20 299.05 Z"/><path fill="#0ef08c" d="M285.00 291.0 L288.90 291.0 L285.70 296.30 L281.20 298.20 Z"/>
<path d="M322.70 291.0 H328.30 V304.1 H324.70 V294.90 L322.70 293.70 Z" fill="#0ef08c"/>
<path fill-rule="evenodd" fill="#0ef08c" d="M344.05 299.05 A5.05 5.05 0 1 1 333.95 299.05 A5.05 5.05 0 1 1 344.05 299.05 Z M340.30 299.05 A1.3 1.3 0 1 0 337.70 299.05 A1.3 1.3 0 1 0 340.30 299.05 Z"/><path fill="#0ef08c" d="M338.10 291.0 L342.00 291.0 L338.80 296.30 L334.30 298.20 Z"/>
<path fill-rule="evenodd" fill="#0ef08c" d="M397.75 291.0 A5.15 5.15 0 0 1 402.90 296.15 V298.95 A5.15 5.15 0 0 1 397.75 304.1 A5.15 5.15 0 0 1 392.60 298.95 V296.15 A5.15 5.15 0 0 1 397.75 291.0 Z M397.75 294.30 A1.2 1.2 0 0 1 398.95 295.50 V299.60 A1.2 1.2 0 0 1 397.75 300.80 A1.2 1.2 0 0 1 396.55 299.60 V295.50 A1.2 1.2 0 0 1 397.75 294.30 Z"/>
<path d="M513.00 291.0 H518.60 V304.1 H515.00 V294.90 L513.00 293.70 Z" fill="#0ef08c"/>
<path fill-rule="evenodd" fill="#0ef08c" d="M529.20 291.0 A5.0 5.0 0 0 1 534.20 296.00 V299.10 A5.0 5.0 0 0 1 529.20 304.1 A5.0 5.0 0 0 1 524.20 299.10 V296.00 A5.0 5.0 0 0 1 529.20 291.0 Z M529.20 294.30 A1.2 1.2 0 0 1 530.40 295.50 V299.60 A1.2 1.2 0 0 1 529.20 300.80 A1.2 1.2 0 0 1 528.00 299.60 V295.50 A1.2 1.2 0 0 1 529.20 294.30 Z"/>
<path fill-rule="evenodd" fill="#0ef08c" d="M541.90 291.0 A5.0 5.0 0 0 1 546.90 296.00 V299.10 A5.0 5.0 0 0 1 541.90 304.1 A5.0 5.0 0 0 1 536.90 299.10 V296.00 A5.0 5.0 0 0 1 541.90 291.0 Z M541.90 294.30 A1.2 1.2 0 0 1 543.10 295.50 V299.60 A1.2 1.2 0 0 1 541.90 300.80 A1.2 1.2 0 0 1 540.70 299.60 V295.50 A1.2 1.2 0 0 1 541.90 294.30 Z"/>
<path fill-rule="evenodd" fill="#f17fb5" d="M722.90 291.0 A4.9 4.9 0 0 1 727.80 295.90 V299.20 A4.9 4.9 0 0 1 722.90 304.1 A4.9 4.9 0 0 1 718.00 299.20 V295.90 A4.9 4.9 0 0 1 722.90 291.0 Z M722.90 294.30 A1.2 1.2 0 0 1 724.10 295.50 V299.60 A1.2 1.2 0 0 1 722.90 300.80 A1.2 1.2 0 0 1 721.70 299.60 V295.50 A1.2 1.2 0 0 1 722.90 294.30 Z"/>
<path d="M936.80 291.0 H942.40 V304.1 H938.80 V294.90 L936.80 293.70 Z" fill="#3ddcf3"/>
<path fill="#0ef08c" d="M454.40 291.0 H461.90 V294.30 H457.70 L457.50 295.60 L454.20 297.90 Z"/><path fill="none" stroke="#0ef08c" stroke-width="3.45" d="M456.25 296.80 A3.05 3.05 0 1 1 455.41 300.92"/>
<path fill-rule="evenodd" fill="#0ef08c" d="M470.60 291.0 A4.8 4.8 0 0 1 475.40 295.80 V299.30 A4.8 4.8 0 0 1 470.60 304.1 A4.8 4.8 0 0 1 465.80 299.30 V295.80 A4.8 4.8 0 0 1 470.60 291.0 Z M470.60 294.30 A1.2 1.2 0 0 1 471.80 295.50 V299.60 A1.2 1.2 0 0 1 470.60 300.80 A1.2 1.2 0 0 1 469.40 299.60 V295.50 A1.2 1.2 0 0 1 470.60 294.30 Z"/>
<path fill="none" stroke="#3ddcf3" stroke-width="3.4" d="M864.90 295.60 A3.0 3.0 0 1 1 870.36 297.32 L864.40 301.90"/><path fill="#3ddcf3" d="M863.10 300.80 H872.60 V304.1 H863.10 Z"/>
<path fill-rule="evenodd" fill="#3ddcf3" d="M880.80 291.0 A4.8 4.8 0 0 1 885.60 295.80 V299.30 A4.8 4.8 0 0 1 880.80 304.1 A4.8 4.8 0 0 1 876.00 299.30 V295.80 A4.8 4.8 0 0 1 880.80 291.0 Z M880.80 294.30 A1.2 1.2 0 0 1 882.00 295.50 V299.60 A1.2 1.2 0 0 1 880.80 300.80 A1.2 1.2 0 0 1 879.60 299.60 V295.50 A1.2 1.2 0 0 1 880.80 294.30 Z"/>
<path fill="#3ddcf3" d="M889.00 291.0 H892.50 V304.1 H889.00 Z"/><path fill="#3ddcf3" d="M891.60 298.40 L895.40 291.0 H899.30 L894.40 298.90 L891.60 301.20 Z"/><path fill="#3ddcf3" d="M893.90 296.20 L899.30 304.1 H895.30 L891.80 299.60 Z"/>
<path d="M46.3 278.3 C49.5 279 51 288.3 53.8 288.3 C56.6 288.3 58 278.2 60.8 278.2 C63.6 278.2 65 287.5 68.5 288.2" fill="none" stroke="#8d97a3" stroke-width="1.3" stroke-linecap="round"/>
<path d="M46.2 322.6 H51.5 V329.6 H57.7 V322.6 H63.4 V329.6 H68.4" fill="none" stroke="#2ee07e" stroke-width="1.3"/>
<path d="M209.2 274.4 H215.6 V272.2 L221.6 276.2 L215.6 280.0 V277.9 H209.2 Z" fill="#2ee07e" stroke="#2ee07e" stroke-width="0.9" stroke-linejoin="round"/>
<path d="M221.6 302.6 H215.2 V300.6 L209.2 304.3 L215.2 307.9 V306.0 H221.6 Z" fill="#8d97a3" stroke="#8d97a3" stroke-width="0.9" stroke-linejoin="round"/>
<path d="M209.2 332.7 L212.6 330.1 V331.4 H218.2 V330.1 L221.6 332.7 L218.2 335.3 V334.0 H212.6 V335.3 Z" fill="#8d97a3" stroke="#8d97a3" stroke-width="0.8" stroke-linejoin="round"/>
<path d="M580.3 283 V279.5 C580.3 277.3 581.6 275.9 583.2 275.9 C584.8 275.9 586.1 277.3 586.1 279.5 V283" fill="none" stroke="#8d97a3" stroke-width="1"/>
<circle cx="583.2" cy="285.6" r="5.3" fill="#b4b9c2"/>
<path d="M586.00 321.45 A5.6 5.6 0 0 0 577.60 326.30 M580.40 331.15 A5.6 5.6 0 0 0 588.80 326.30" fill="none" stroke="#8d97a3" stroke-width="1.3" stroke-linecap="round"/><path d="M575.90 325.70 L579.30 325.70 L577.60 328.20 Z" fill="#8d97a3"/><path d="M587.10 326.90 L590.50 326.90 L588.80 324.40 Z" fill="#8d97a3"/>
<path d="M620.8 309 V300.4 M627.9 298.2 V307.6" fill="none" stroke="#8d97a3" stroke-width="1.0"/><path d="M620.3 299.9 L628.4 297.8 V300.5 L620.3 302.5 Z" fill="#8d97a3"/><circle cx="619.4" cy="309.4" r="1.8" fill="#8d97a3"/><path d="M617 298.2 L630.5 311.3" stroke="#3a3a46" stroke-width="2.4"/><path d="M617 298.2 L630.5 311.3" stroke="#8d97a3" stroke-width="1.1" stroke-linecap="round"/>
<path d="M668.11 279.34 A6.3 6.3 0 1 1 660.89 279.34 M664.5 276.9 V283.0" fill="none" stroke="#f17fb5" stroke-width="1.5"/>
<circle cx="659.3" cy="332.8" r="1.8" fill="#f17fb5"/>
<circle cx="664.2" cy="328.1" r="1.8" fill="#f17fb5"/>
<circle cx="669.1" cy="323.5" r="1.8" fill="#f17fb5"/>
<path d="M786.30 278.65 A5.6 5.6 0 0 0 777.90 283.50 M780.70 288.35 A5.6 5.6 0 0 0 789.10 283.50" fill="none" stroke="#8d97a3" stroke-width="1.3" stroke-linecap="round"/><path d="M776.20 282.90 L779.60 282.90 L777.90 285.40 Z" fill="#8d97a3"/><path d="M787.40 284.10 L790.80 284.10 L789.10 281.60 Z" fill="#8d97a3"/>
<path d="M783.50 321.60 L783.95 321.70 L784.36 321.98 L784.72 322.37 L785.03 322.78 L785.33 323.11 L785.64 323.33 L786.02 323.40 L786.46 323.37 L786.97 323.30 L787.50 323.28 L787.99 323.38 L788.38 323.62 L788.62 324.01 L788.72 324.50 L788.70 325.03 L788.63 325.54 L788.60 325.98 L788.67 326.36 L788.89 326.67 L789.22 326.97 L789.63 327.28 L790.02 327.64 L790.30 328.05 L790.40 328.50 L790.30 328.95 L790.02 329.36 L789.63 329.72 L789.22 330.03 L788.89 330.33 L788.67 330.64 L788.60 331.02 L788.63 331.46 L788.70 331.97 L788.72 332.50 L788.62 332.99 L788.38 333.38 L787.99 333.62 L787.50 333.72 L786.97 333.70 L786.46 333.63 L786.02 333.60 L785.64 333.67 L785.33 333.89 L785.03 334.22 L784.72 334.63 L784.36 335.02 L783.95 335.30 L783.50 335.40 L783.05 335.30 L782.64 335.02 L782.28 334.63 L781.97 334.22 L781.67 333.89 L781.36 333.67 L780.98 333.60 L780.54 333.63 L780.03 333.70 L779.50 333.72 L779.01 333.62 L778.62 333.38 L778.38 332.99 L778.28 332.50 L778.30 331.97 L778.37 331.46 L778.40 331.02 L778.33 330.64 L778.11 330.33 L777.78 330.03 L777.37 329.72 L776.98 329.36 L776.70 328.95 L776.60 328.50 L776.70 328.05 L776.98 327.64 L777.37 327.28 L777.78 326.97 L778.11 326.67 L778.33 326.36 L778.40 325.98 L778.37 325.54 L778.30 325.03 L778.28 324.50 L778.38 324.01 L778.62 323.62 L779.01 323.38 L779.50 323.28 L780.03 323.30 L780.54 323.37 L780.98 323.40 L781.36 323.33 L781.67 323.11 L781.97 322.78 L782.28 322.37 L782.64 321.98 L783.05 321.70 L783.50 321.60 Z M785.7 328.5 A2.2 2.2 0 1 0 781.3 328.5 A2.2 2.2 0 1 0 785.7 328.5 Z" fill="#8d97a3" fill-rule="evenodd"/>
<path d="M824.61 278.84 A6.3 6.3 0 1 1 817.39 278.84 M821 276.4 V282.5" fill="none" stroke="#8d97a3" stroke-width="1.4"/>
<path d="M811.2 323.6 H827.5 C828.6 323.6 829.3 324.5 829.6 325.6 L831.3 333.7" fill="none" stroke="#8d97a3" stroke-width="1.1"/>
<path d="M992.5 283.5 C988 278.9 985.5 277.6 981.6 277.6 C977.7 277.6 975.4 280.3 975.4 283.5 C975.4 286.7 977.7 289.4 981.6 289.4 C985.5 289.4 988 288.1 992.5 283.5 C997 278.9 999.5 277.6 1003.4 277.6 C1007.3 277.6 1009.6 280.3 1009.6 283.5 C1009.6 286.7 1007.3 289.4 1003.4 289.4 C999.5 289.4 997 288.1 992.5 283.5 Z" fill="none" stroke="#8d97a3" stroke-width="1.4"/>
<path d="M1044.0 276.0h1.5v1.5h-1.5zM1045.5 276.0h1.5v1.5h-1.5zM1047.0 276.0h1.5v1.5h-1.5zM1048.5 276.0h1.5v1.5h-1.5zM1050.0 276.0h1.5v1.5h-1.5zM1051.5 276.0h1.5v1.5h-1.5zM1099.0 276.0h1.5v1.5h-1.5zM1053.0 276.0h1.5v1.5h-1.5zM1054.5 276.0h1.5v1.5h-1.5zM1102.0 276.0h1.5v1.5h-1.5zM1056.0 276.0h1.5v1.5h-1.5zM1057.5 276.0h1.5v1.5h-1.5zM1106.5 276.0h1.5v1.5h-1.5zM1108.0 276.0h1.5v1.5h-1.5zM1062.0 276.0h1.5v1.5h-1.5zM1109.5 276.0h1.5v1.5h-1.5zM1063.5 276.0h1.5v1.5h-1.5zM1065.0 276.0h1.5v1.5h-1.5zM1112.5 276.0h1.5v1.5h-1.5zM1114.0 276.0h1.5v1.5h-1.5zM1115.5 276.0h1.5v1.5h-1.5zM1069.5 276.0h1.5v1.5h-1.5zM1117.0 276.0h1.5v1.5h-1.5zM1118.5 276.0h1.5v1.5h-1.5zM1120.0 276.0h1.5v1.5h-1.5zM1121.5 276.0h1.5v1.5h-1.5zM1123.0 276.0h1.5v1.5h-1.5zM1124.5 276.0h1.5v1.5h-1.5zM1047.0 277.5h1.5v1.5h-1.5zM1048.5 277.5h1.5v1.5h-1.5zM1050.0 277.5h1.5v1.5h-1.5zM1054.5 277.5h1.5v1.5h-1.5zM1056.0 277.5h1.5v1.5h-1.5zM1059.0 277.5h1.5v1.5h-1.5zM1060.5 277.5h1.5v1.5h-1.5zM1111.0 277.5h1.5v1.5h-1.5zM1112.5 277.5h1.5v1.5h-1.5zM1066.5 277.5h1.5v1.5h-1.5zM1114.0 277.5h1.5v1.5h-1.5zM1068.0 277.5h1.5v1.5h-1.5zM1115.5 277.5h1.5v1.5h-1.5zM1069.5 277.5h1.5v1.5h-1.5zM1071.0 277.5h1.5v1.5h-1.5zM1118.5 277.5h1.5v1.5h-1.5zM1074.0 277.5h1.5v1.5h-1.5zM1121.5 277.5h1.5v1.5h-1.5zM1126.0 277.5h1.5v1.5h-1.5zM1044.0 279.0h1.5v1.5h-1.5zM1047.0 279.0h1.5v1.5h-1.5zM1048.5 279.0h1.5v1.5h-1.5zM1050.0 279.0h1.5v1.5h-1.5zM1051.5 279.0h1.5v1.5h-1.5zM1053.0 279.0h1.5v1.5h-1.5zM1056.0 279.0h1.5v1.5h-1.5zM1057.5 279.0h1.5v1.5h-1.5zM1105.0 279.0h1.5v1.5h-1.5zM1062.0 279.0h1.5v1.5h-1.5zM1109.5 279.0h1.5v1.5h-1.5zM1063.5 279.0h1.5v1.5h-1.5zM1065.0 279.0h1.5v1.5h-1.5zM1112.5 279.0h1.5v1.5h-1.5zM1066.5 279.0h1.5v1.5h-1.5zM1114.0 279.0h1.5v1.5h-1.5zM1115.5 279.0h1.5v1.5h-1.5zM1069.5 279.0h1.5v1.5h-1.5zM1117.0 279.0h1.5v1.5h-1.5zM1071.0 279.0h1.5v1.5h-1.5zM1118.5 279.0h1.5v1.5h-1.5zM1072.5 279.0h1.5v1.5h-1.5zM1121.5 279.0h1.5v1.5h-1.5zM1123.0 279.0h1.5v1.5h-1.5zM1124.5 279.0h1.5v1.5h-1.5zM1044.0 280.5h1.5v1.5h-1.5zM1045.5 280.5h1.5v1.5h-1.5zM1047.0 280.5h1.5v1.5h-1.5zM1050.0 280.5h1.5v1.5h-1.5zM1051.5 280.5h1.5v1.5h-1.5zM1099.0 280.5h1.5v1.5h-1.5zM1053.0 280.5h1.5v1.5h-1.5zM1100.5 280.5h1.5v1.5h-1.5zM1054.5 280.5h1.5v1.5h-1.5zM1057.5 280.5h1.5v1.5h-1.5zM1105.0 280.5h1.5v1.5h-1.5zM1059.0 280.5h1.5v1.5h-1.5zM1060.5 280.5h1.5v1.5h-1.5zM1062.0 280.5h1.5v1.5h-1.5zM1109.5 280.5h1.5v1.5h-1.5zM1068.0 280.5h1.5v1.5h-1.5zM1115.5 280.5h1.5v1.5h-1.5zM1117.0 280.5h1.5v1.5h-1.5zM1071.0 280.5h1.5v1.5h-1.5zM1118.5 280.5h1.5v1.5h-1.5zM1120.0 280.5h1.5v1.5h-1.5zM1121.5 280.5h1.5v1.5h-1.5zM1124.5 280.5h1.5v1.5h-1.5zM1126.0 280.5h1.5v1.5h-1.5zM1044.0 282.0h1.5v1.5h-1.5zM1045.5 282.0h1.5v1.5h-1.5zM1048.5 282.0h1.5v1.5h-1.5zM1050.0 282.0h1.5v1.5h-1.5zM1054.5 282.0h1.5v1.5h-1.5zM1056.0 282.0h1.5v1.5h-1.5zM1059.0 282.0h1.5v1.5h-1.5zM1108.0 282.0h1.5v1.5h-1.5zM1062.0 282.0h1.5v1.5h-1.5zM1109.5 282.0h1.5v1.5h-1.5zM1065.0 282.0h1.5v1.5h-1.5zM1114.0 282.0h1.5v1.5h-1.5zM1115.5 282.0h1.5v1.5h-1.5zM1069.5 282.0h1.5v1.5h-1.5zM1117.0 282.0h1.5v1.5h-1.5zM1118.5 282.0h1.5v1.5h-1.5zM1123.0 282.0h1.5v1.5h-1.5zM1124.5 282.0h1.5v1.5h-1.5zM1126.0 282.0h1.5v1.5h-1.5zM1044.0 283.5h1.5v1.5h-1.5zM1045.5 283.5h1.5v1.5h-1.5zM1047.0 283.5h1.5v1.5h-1.5zM1048.5 283.5h1.5v1.5h-1.5zM1050.0 283.5h1.5v1.5h-1.5zM1051.5 283.5h1.5v1.5h-1.5zM1053.0 283.5h1.5v1.5h-1.5zM1100.5 283.5h1.5v1.5h-1.5zM1054.5 283.5h1.5v1.5h-1.5zM1102.0 283.5h1.5v1.5h-1.5zM1056.0 283.5h1.5v1.5h-1.5zM1057.5 283.5h1.5v1.5h-1.5zM1060.5 283.5h1.5v1.5h-1.5zM1063.5 283.5h1.5v1.5h-1.5zM1111.0 283.5h1.5v1.5h-1.5zM1065.0 283.5h1.5v1.5h-1.5zM1112.5 283.5h1.5v1.5h-1.5zM1114.0 283.5h1.5v1.5h-1.5zM1117.0 283.5h1.5v1.5h-1.5zM1118.5 283.5h1.5v1.5h-1.5zM1120.0 283.5h1.5v1.5h-1.5zM1121.5 283.5h1.5v1.5h-1.5zM1126.0 283.5h1.5v1.5h-1.5zM1044.0 285.0h1.5v1.5h-1.5zM1047.0 285.0h1.5v1.5h-1.5zM1048.5 285.0h1.5v1.5h-1.5zM1050.0 285.0h1.5v1.5h-1.5zM1053.0 285.0h1.5v1.5h-1.5zM1054.5 285.0h1.5v1.5h-1.5zM1102.0 285.0h1.5v1.5h-1.5zM1057.5 285.0h1.5v1.5h-1.5zM1059.0 285.0h1.5v1.5h-1.5zM1062.0 285.0h1.5v1.5h-1.5zM1109.5 285.0h1.5v1.5h-1.5zM1111.0 285.0h1.5v1.5h-1.5zM1065.0 285.0h1.5v1.5h-1.5zM1112.5 285.0h1.5v1.5h-1.5zM1114.0 285.0h1.5v1.5h-1.5zM1115.5 285.0h1.5v1.5h-1.5zM1069.5 285.0h1.5v1.5h-1.5zM1117.0 285.0h1.5v1.5h-1.5zM1118.5 285.0h1.5v1.5h-1.5zM1072.5 285.0h1.5v1.5h-1.5zM1123.0 285.0h1.5v1.5h-1.5zM1077.0 285.0h1.5v1.5h-1.5zM1126.0 285.0h1.5v1.5h-1.5zM1044.0 286.5h1.5v1.5h-1.5zM1047.0 286.5h1.5v1.5h-1.5zM1048.5 286.5h1.5v1.5h-1.5zM1050.0 286.5h1.5v1.5h-1.5zM1097.5 286.5h1.5v1.5h-1.5zM1051.5 286.5h1.5v1.5h-1.5zM1053.0 286.5h1.5v1.5h-1.5zM1054.5 286.5h1.5v1.5h-1.5zM1056.0 286.5h1.5v1.5h-1.5zM1057.5 286.5h1.5v1.5h-1.5zM1059.0 286.5h1.5v1.5h-1.5zM1106.5 286.5h1.5v1.5h-1.5zM1060.5 286.5h1.5v1.5h-1.5zM1062.0 286.5h1.5v1.5h-1.5zM1109.5 286.5h1.5v1.5h-1.5zM1111.0 286.5h1.5v1.5h-1.5zM1065.0 286.5h1.5v1.5h-1.5zM1112.5 286.5h1.5v1.5h-1.5zM1066.5 286.5h1.5v1.5h-1.5zM1114.0 286.5h1.5v1.5h-1.5zM1115.5 286.5h1.5v1.5h-1.5zM1117.0 286.5h1.5v1.5h-1.5zM1118.5 286.5h1.5v1.5h-1.5zM1120.0 286.5h1.5v1.5h-1.5zM1121.5 286.5h1.5v1.5h-1.5zM1123.0 286.5h1.5v1.5h-1.5zM1124.5 286.5h1.5v1.5h-1.5zM1126.0 286.5h1.5v1.5h-1.5zM1045.5 288.0h1.5v1.5h-1.5zM1047.0 288.0h1.5v1.5h-1.5zM1048.5 288.0h1.5v1.5h-1.5zM1050.0 288.0h1.5v1.5h-1.5zM1051.5 288.0h1.5v1.5h-1.5zM1053.0 288.0h1.5v1.5h-1.5zM1054.5 288.0h1.5v1.5h-1.5zM1102.0 288.0h1.5v1.5h-1.5zM1056.0 288.0h1.5v1.5h-1.5zM1057.5 288.0h1.5v1.5h-1.5zM1105.0 288.0h1.5v1.5h-1.5zM1059.0 288.0h1.5v1.5h-1.5zM1062.0 288.0h1.5v1.5h-1.5zM1109.5 288.0h1.5v1.5h-1.5zM1063.5 288.0h1.5v1.5h-1.5zM1111.0 288.0h1.5v1.5h-1.5zM1065.0 288.0h1.5v1.5h-1.5zM1112.5 288.0h1.5v1.5h-1.5zM1066.5 288.0h1.5v1.5h-1.5zM1115.5 288.0h1.5v1.5h-1.5zM1118.5 288.0h1.5v1.5h-1.5zM1072.5 288.0h1.5v1.5h-1.5zM1120.0 288.0h1.5v1.5h-1.5zM1121.5 288.0h1.5v1.5h-1.5zM1123.0 288.0h1.5v1.5h-1.5zM1077.0 288.0h1.5v1.5h-1.5zM1124.5 288.0h1.5v1.5h-1.5zM1126.0 288.0h1.5v1.5h-1.5zM1044.0 289.5h1.5v1.5h-1.5zM1091.5 289.5h1.5v1.5h-1.5zM1045.5 289.5h1.5v1.5h-1.5zM1047.0 289.5h1.5v1.5h-1.5zM1050.0 289.5h1.5v1.5h-1.5zM1051.5 289.5h1.5v1.5h-1.5zM1100.5 289.5h1.5v1.5h-1.5zM1056.0 289.5h1.5v1.5h-1.5zM1060.5 289.5h1.5v1.5h-1.5zM1114.0 289.5h1.5v1.5h-1.5zM1068.0 289.5h1.5v1.5h-1.5zM1115.5 289.5h1.5v1.5h-1.5zM1069.5 289.5h1.5v1.5h-1.5zM1117.0 289.5h1.5v1.5h-1.5zM1071.0 289.5h1.5v1.5h-1.5zM1120.0 289.5h1.5v1.5h-1.5zM1121.5 289.5h1.5v1.5h-1.5zM1123.0 289.5h1.5v1.5h-1.5zM1126.0 289.5h1.5v1.5h-1.5z" fill="#a4a9b2"/>
<path d="M292.79 847.5 H297.99 M295.39 844.9 V850.1" stroke="#959ca8" stroke-width="1.15"/>
<path d="M361.72 847.5 H366.92 M364.32 844.9 V850.1" stroke="#959ca8" stroke-width="1.15"/>
<path d="M430.65 847.5 H435.85 M433.25 844.9 V850.1" stroke="#959ca8" stroke-width="1.15"/>
<path d="M499.58 847.5 H504.78 M502.18 844.9 V850.1" stroke="#959ca8" stroke-width="1.15"/>
<path d="M568.51 847.5 H573.71 M571.11 844.9 V850.1" stroke="#959ca8" stroke-width="1.15"/>
<path d="M844.23 847.5 H849.43 M846.83 844.9 V850.1" stroke="#959ca8" stroke-width="1.15"/>
<path d="M913.16 847.5 H918.36 M915.76 844.9 V850.1" stroke="#959ca8" stroke-width="1.15"/>
<path d="M982.09 847.5 H987.29 M984.69 844.9 V850.1" stroke="#959ca8" stroke-width="1.15"/>
<path d="M1051.02 847.5 H1056.22 M1053.62 844.9 V850.1" stroke="#959ca8" stroke-width="1.15"/>
<path d="M1119.95 847.5 H1125.15 M1122.55 844.9 V850.1" stroke="#959ca8" stroke-width="1.15"/>
<path d="M35.2 597.3 L29 602.8 L35.2 608.3" fill="none" stroke="#8d97a3" stroke-width="1.3"/>
<path d="M1177.8 597.3 L1184 602.8 L1177.8 608.3" fill="none" stroke="#8d97a3" stroke-width="1.3"/>
<path d="M1167.3 847.5 L1170.4 843 H1180.9 V852 H1170.4 Z" fill="#686874" stroke="#686874" stroke-width="1.2" stroke-linejoin="round"/><path d="M1173.1 845.5 L1177.1 849.5 M1177.1 845.5 L1173.1 849.5" stroke="#2c2c35" stroke-width="1.1"/>
</svg>
</body></html>
